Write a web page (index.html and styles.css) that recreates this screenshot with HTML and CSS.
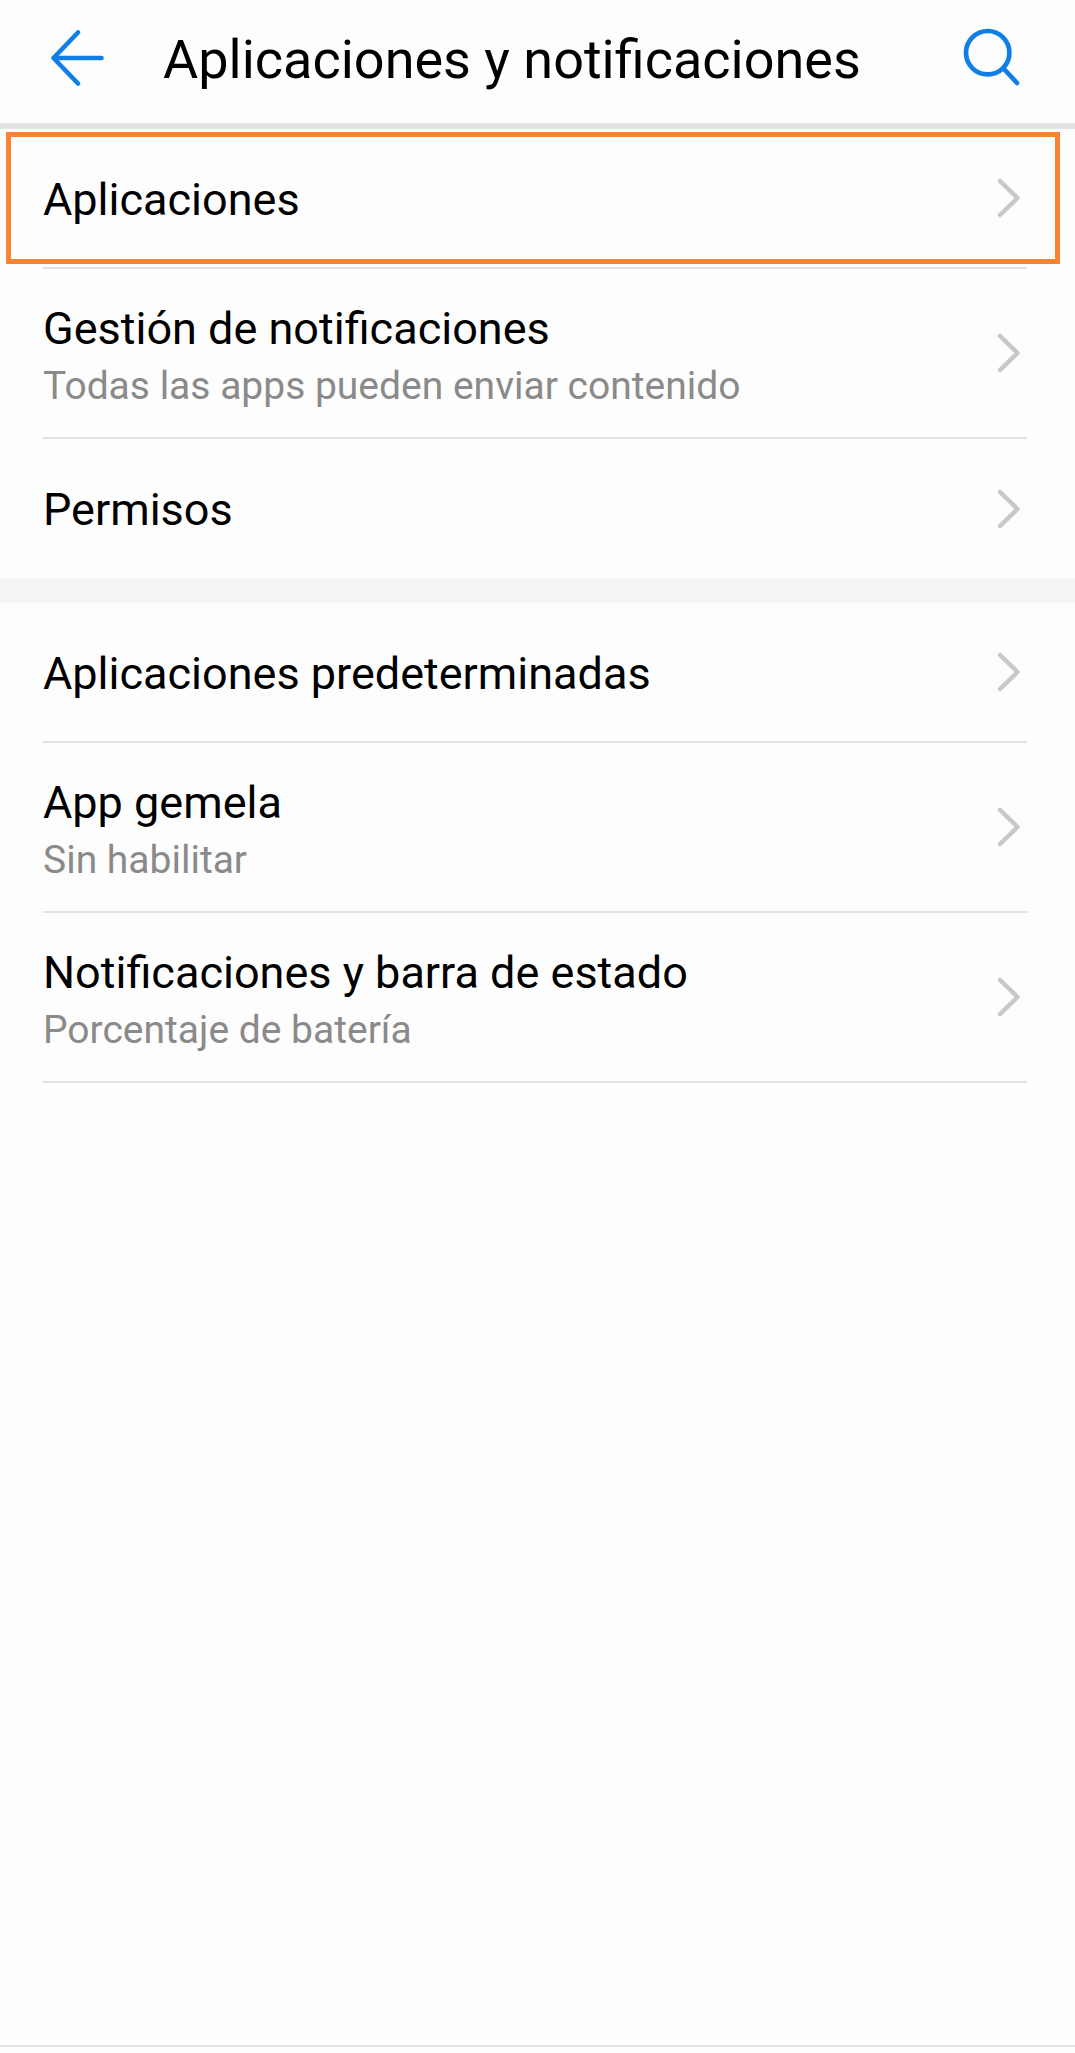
FILE: index.html
```html
<!DOCTYPE html>
<html lang="es">
<head>
<meta charset="utf-8">
<title>Aplicaciones y notificaciones</title>
<link rel="stylesheet" href="styles.css">
</head>
<body>
<div class="screen">
  <header class="topbar">
    <svg class="back" width="56" height="58" viewBox="0 0 56 58"><path d="M29 3.5 L4.5 29 L29 54.5 M4.5 29 H52.5" fill="none" stroke="#0f7fe6" stroke-width="4.6" stroke-linecap="round" stroke-linejoin="round"/></svg>
    <h1 class="title">Aplicaciones y notificaciones</h1>
    <svg class="search" width="58" height="58" viewBox="0 0 58 58"><circle cx="25.7" cy="24.7" r="21.7" fill="none" stroke="#0f7fe6" stroke-width="4.7"/><path d="M42 41 L55 55" fill="none" stroke="#0f7fe6" stroke-width="4.7" stroke-linecap="round"/></svg>
  </header>
  <section class="group">
    <div class="row single first"><div class="text"><div class="name">Aplicaciones</div></div><svg class="chev" width="24" height="40" viewBox="0 0 24 40"><path d="M3 3 L20.5 20 L3 37" fill="none" stroke="#c8c8c8" stroke-width="4.5" stroke-linecap="round" stroke-linejoin="round"/></svg></div>
    <div class="row double"><div class="text"><div class="name">Gestión de notificaciones</div><div class="sub">Todas las apps pueden enviar contenido</div></div><svg class="chev" width="24" height="40" viewBox="0 0 24 40"><path d="M3 3 L20.5 20 L3 37" fill="none" stroke="#c8c8c8" stroke-width="4.5" stroke-linecap="round" stroke-linejoin="round"/></svg></div>
    <div class="row single last"><div class="text"><div class="name">Permisos</div></div><svg class="chev" width="24" height="40" viewBox="0 0 24 40"><path d="M3 3 L20.5 20 L3 37" fill="none" stroke="#c8c8c8" stroke-width="4.5" stroke-linecap="round" stroke-linejoin="round"/></svg></div>
  </section>
  <div class="gap"></div>
  <section class="group">
    <div class="row single"><div class="text"><div class="name">Aplicaciones predeterminadas</div></div><svg class="chev" width="24" height="40" viewBox="0 0 24 40"><path d="M3 3 L20.5 20 L3 37" fill="none" stroke="#c8c8c8" stroke-width="4.5" stroke-linecap="round" stroke-linejoin="round"/></svg></div>
    <div class="row double"><div class="text"><div class="name">App gemela</div><div class="sub">Sin habilitar</div></div><svg class="chev" width="24" height="40" viewBox="0 0 24 40"><path d="M3 3 L20.5 20 L3 37" fill="none" stroke="#c8c8c8" stroke-width="4.5" stroke-linecap="round" stroke-linejoin="round"/></svg></div>
    <div class="row double"><div class="text"><div class="name">Notificaciones y barra de estado</div><div class="sub">Porcentaje de batería</div></div><svg class="chev" width="24" height="40" viewBox="0 0 24 40"><path d="M3 3 L20.5 20 L3 37" fill="none" stroke="#c8c8c8" stroke-width="4.5" stroke-linecap="round" stroke-linejoin="round"/></svg></div>
  </section>
  <div class="highlight"></div>
  <div class="bottomline"></div>
</div>
</body>
</html>
```
FILE: styles.css
```css
* { box-sizing: border-box; }
html, body { margin: 0; padding: 0; }
body { background: #fdfdfd; font-family: Roboto, "Liberation Sans", sans-serif; color: #000; }
.screen { position: relative; width: 1075px; height: 2053px; overflow: hidden; }
.topbar { display: flex; align-items: center; height: 129px; border-bottom: 6px solid #e2e2e2; padding: 0 0 9px 49px; }
.back { flex: none; margin: 2px 58px 0 0; }
.title { flex: 1; margin: 5px 0 0; font-size: 54px; font-weight: 400; line-height: 62px; white-space: nowrap; }
.search { flex: none; margin-right: 55px; }
.row { display: flex; align-items: center; justify-content: space-between; margin: 0 48px 0 43px; border-bottom: 2px solid #e2e2e2; padding-right: 6px; }
.single { height: 140px; }
.double { height: 170px; }
.last { border-bottom: none; }
.single .text { padding-top: 3px; }
.double .text { padding-top: 5px; }
.last .text { padding-top: 1px; }
.name { font-size: 45px; line-height: 52px; }
.sub { font-size: 39px; line-height: 46px; color: #8a8a8a; margin-top: 8px; }
.gap { height: 24px; background: #f4f4f4; }
.highlight { position: absolute; left: 6px; top: 132px; width: 1054px; height: 132px; border: 5px solid #fb8230; }
.bottomline { position: absolute; left: 0; right: 0; top: 2045px; height: 2px; background: #e2e2e2; }
```
